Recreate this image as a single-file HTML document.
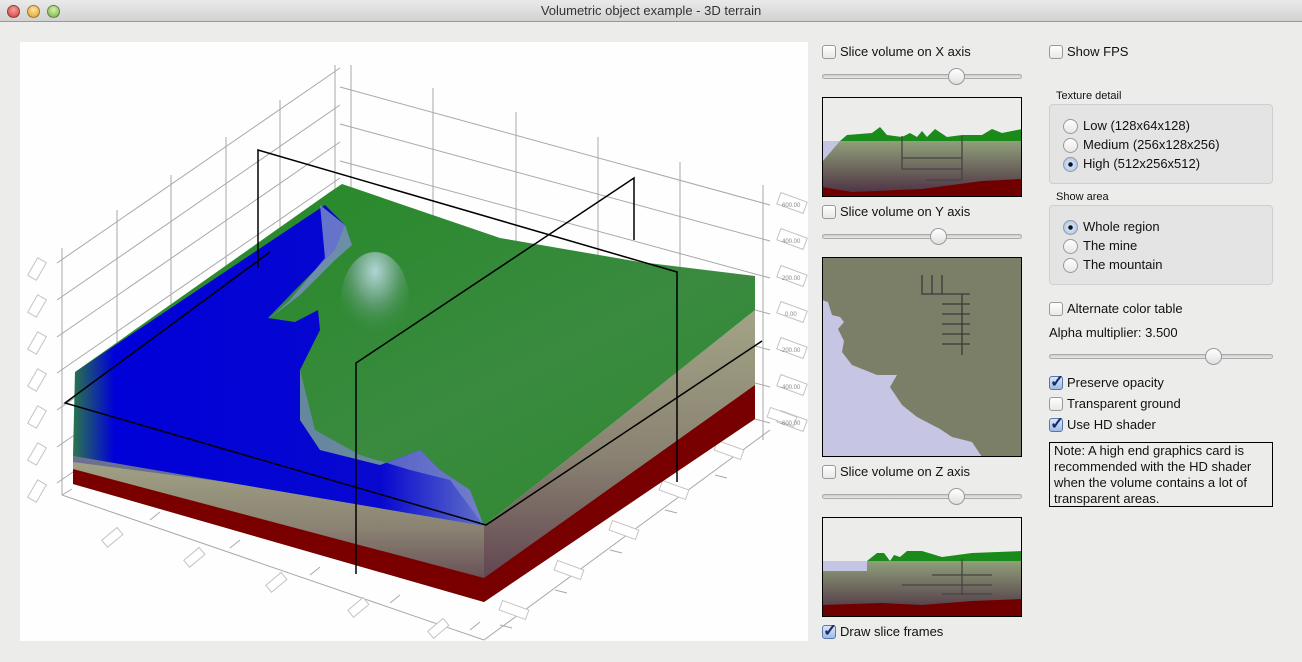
<!DOCTYPE html>
<html><head><meta charset="utf-8"><style>
*{margin:0;padding:0;box-sizing:border-box}
body{width:1302px;height:662px;background:#ecedeb;font-family:"Liberation Sans",sans-serif;font-size:13px;color:#111;position:relative;overflow:hidden}
.tb{position:absolute;left:0;top:0;width:1302px;height:22px;background:linear-gradient(#eaeaea,#d2d2d2);border-bottom:1px solid #999;text-align:center;font-size:13px;line-height:22px;color:#333}
.tl{position:absolute;top:5px;width:13px;height:13px;border-radius:50%;border:1px solid rgba(0,0,0,.35)}
.a{position:absolute;white-space:nowrap}
.cb{position:absolute;width:14px;height:14px;border:1px solid #999;border-radius:3px;background:linear-gradient(#fff,#e8e8e8)}
.rd{position:absolute;width:15px;height:15px;border:1px solid #999;border-radius:50%;background:linear-gradient(#fff,#e6e6e6)}
.rd.on{background:radial-gradient(circle,#111 0 2px,#cfe0f5 2.5px,#9fc0ea)}
.trk{position:absolute;height:5px;border:1px solid #aaa;border-radius:3px;background:linear-gradient(#ccc,#e8e8e8)}
.knb{position:absolute;width:17px;height:17px;border:1px solid #999;border-radius:50%;background:linear-gradient(#fff,#e0e0e0)}
.grp{position:absolute;border:1px solid #cfcfcf;border-radius:4px;background:#e4e4e4}
.ck{position:absolute;font-size:17px;color:#1a2a6a;font-weight:bold;line-height:14px}
</style></head><body>
<div class="tb">Volumetric object example - 3D terrain</div>
<div class="tl" style="left:7px;background:radial-gradient(circle at 50% 35%,#f5a0a0,#d33a32)"></div>
<div class="tl" style="left:27px;background:radial-gradient(circle at 50% 35%,#fde3a0,#e0a020)"></div>
<div class="tl" style="left:47px;background:radial-gradient(circle at 50% 35%,#d5f0b0,#70b040)"></div>

<svg class="a" style="left:20px;top:42px" width="788" height="599" viewBox="20 42 788 599">
<defs>
<linearGradient id="side" x1="0" y1="0" x2="0" y2="1"><stop offset="0" stop-color="#a2a486"/><stop offset=".5" stop-color="#8a8272"/><stop offset="1" stop-color="#5a3a4a"/></linearGradient>
<linearGradient id="blue" x1="0" y1="0" x2="1" y2="0"><stop offset="0" stop-color="#0000d8" stop-opacity=".15"/><stop offset=".1" stop-color="#0000d8"/><stop offset=".75" stop-color="#0808d0"/><stop offset="1" stop-color="#6070c8"/></linearGradient>
<radialGradient id="mt" cx=".5" cy=".2" r=".7"><stop offset="0" stop-color="#b0d4d4"/><stop offset=".5" stop-color="#5a9a6a"/><stop offset="1" stop-color="#2a8a30" stop-opacity="0"/></radialGradient>
<linearGradient id="gr" x1="0" y1="0" x2="1" y2="1"><stop offset="0" stop-color="#228a22"/><stop offset=".6" stop-color="#3a8a40"/><stop offset="1" stop-color="#2c8a2c"/></linearGradient>
</defs>
<rect x="20" y="42" width="788" height="599" fill="#fdfefd"/>
<g stroke="#a8a8a8" stroke-width="1" fill="none">
<path d="M57 263L340 68M57 300L340 105M57 337L340 142M57 373L340 178M57 410L340 215M57 447L340 252M57 483L340 288"/>
<path d="M340 87L770 205M340 124L770 241M340 161L770 278M340 198L770 314M340 235L770 350M340 272L770 387M340 309L770 423"/>
<path d="M62 248V495M117 210V470M171 175V460M226 137V440M280 100V420M335 65V400M351 65V300M433 88V400M516 112V400M598 137V400M680 162V420M763 185V440"/>
<path d="M62 495L484 640M484 640L770 430M62 495L72 489M150 520L160 512M230 548L240 540M310 575L320 567M390 603L400 595M470 630L480 622M500 625L512 628M555 590L567 593M610 550L622 553M665 510L677 513M715 475L727 478"/>
</g>
<g fill="#fff" stroke="#c4c4c4">
<rect x="32" y="259" width="10" height="20" transform="rotate(30 37 269)"/><rect x="32" y="296" width="10" height="20" transform="rotate(30 37 306)"/><rect x="32" y="333" width="10" height="20" transform="rotate(30 37 343)"/><rect x="32" y="370" width="10" height="20" transform="rotate(30 37 380)"/><rect x="32" y="407" width="10" height="20" transform="rotate(30 37 417)"/><rect x="32" y="444" width="10" height="20" transform="rotate(30 37 454)"/><rect x="32" y="481" width="10" height="20" transform="rotate(30 37 491)"/>
<rect x="778" y="197" width="28" height="12" transform="rotate(20 792 203)"/><rect x="778" y="233" width="28" height="12" transform="rotate(20 792 239)"/><rect x="778" y="270" width="28" height="12" transform="rotate(20 792 276)"/><rect x="778" y="306" width="28" height="12" transform="rotate(20 792 312)"/><rect x="778" y="342" width="28" height="12" transform="rotate(20 792 348)"/><rect x="778" y="379" width="28" height="12" transform="rotate(20 792 385)"/><rect x="778" y="415" width="28" height="12" transform="rotate(20 792 421)"/>
<rect x="108" y="527" width="9" height="20" transform="rotate(50 112 537)"/><rect x="190" y="547" width="9" height="20" transform="rotate(50 194 557)"/><rect x="272" y="572" width="9" height="20" transform="rotate(50 276 582)"/><rect x="354" y="597" width="9" height="20" transform="rotate(50 358 607)"/><rect x="434" y="618" width="9" height="20" transform="rotate(50 438 628)"/>
<rect x="500" y="605" width="28" height="10" transform="rotate(20 514 610)"/><rect x="555" y="565" width="28" height="10" transform="rotate(20 569 570)"/><rect x="610" y="525" width="28" height="10" transform="rotate(20 624 530)"/><rect x="660" y="485" width="28" height="10" transform="rotate(20 674 490)"/><rect x="715" y="445" width="28" height="10" transform="rotate(20 729 450)"/><rect x="768" y="412" width="28" height="10" transform="rotate(20 782 417)"/>
</g>
<g font-size="6" fill="#888"><text x="782" y="207">600.00</text><text x="782" y="243">400.00</text><text x="782" y="280">200.00</text><text x="785" y="316">0.00</text><text x="780" y="352">-200.00</text><text x="780" y="389">-400.00</text><text x="780" y="425">-600.00</text></g>
<!-- side faces -->
<polygon points="73,456 484,526 484,602 73,484" fill="url(#side)"/>
<polygon points="73,456 300,470 484,526 400,505 73,462" fill="#4a4e9a" opacity=".6"/>
<polygon points="73,469 484,578 484,602 73,484" fill="#7a0000"/>
<polygon points="484,526 755,310 755,419 484,602" fill="url(#side)"/>
<polygon points="484,578 755,385 755,419 484,602" fill="#780000"/>
<!-- top -->
<polygon points="75,372 330,192 342,184 500,238 640,262 755,276 755,310 484,526 73,456" fill="url(#gr)"/>
<polygon points="75,372 325,205 345,225 335,250 300,285 268,318 295,322 318,310 320,330 300,370 300,420 320,450 380,465 420,450 440,470 470,490 484,526 73,456" fill="url(#blue)"/>
<polygon points="320,205 345,225 352,245 335,260 300,295 270,318 290,300 325,258" fill="#7d8ec8" opacity=".8"/>
<polygon points="300,370 300,420 320,450 380,465 420,450 440,470 470,490 484,526 450,480 410,470 360,455 315,430" fill="#7a88c8" opacity=".7"/>
<ellipse cx="375" cy="300" rx="34" ry="48" fill="url(#mt)"/>
<!-- slice frames -->
<g stroke="#000" stroke-width="1.5" fill="none">
<path d="M258 268V150L677 272V482"/>
<path d="M634 240V178L356 363V574"/>
<path d="M270 252L65 403L486 525L762 341"/>
</g>
</svg>

<div class="cb" style="left:822px;top:45px"></div><div class="a" style="left:840px;top:44px">Slice volume on X axis</div>
<div class="trk" style="left:822px;top:74px;width:200px"></div><div class="knb" style="left:948px;top:68px"></div>
<svg class="a" style="left:822px;top:97px" width="200" height="100" viewBox="0 0 200 100">
<rect width="200" height="100" fill="#ecedeb"/>
<defs><linearGradient id="g1" x1="0" y1="0" x2="0" y2="1"><stop offset="0" stop-color="#8fa07a"/><stop offset="1" stop-color="#4a2a40"/></linearGradient></defs>
<rect x="0" y="44" width="200" height="56" fill="url(#g1)"/>
<polygon points="0,44 18,44 0,65" fill="#c4c4e4"/>
<path d="M18 44L25 38 50 36 58 30 65 38 80 40 88 36 95 40 100 34 105 40 113 32 125 40 140 38 160 38 170 32 180 36 200 32V44H18Z" fill="#1a8a1a"/>
<path d="M0 90L30 95 100 92 160 84 200 82V100H0Z" fill="#700000"/>
<g stroke="#444" stroke-width="1.3" fill="none"><path d="M80 39V72H140M80 61H140M140 39V83H104"/></g>
<rect x=".5" y=".5" width="199" height="99" fill="none" stroke="#000"/>
</svg>
<div class="cb" style="left:822px;top:205px"></div><div class="a" style="left:840px;top:204px">Slice volume on Y axis</div>
<div class="trk" style="left:822px;top:234px;width:200px"></div><div class="knb" style="left:930px;top:228px"></div>
<svg class="a" style="left:822px;top:257px" width="200" height="200" viewBox="0 0 200 200">
<rect width="200" height="200" fill="#7b7f68"/>
<path d="M0 43L6 45 10 58 18 60 22 65 16 72 22 84 20 95 30 108 55 118 75 118 68 130 80 148 95 160 118 172 130 180 150 185 160 200H0Z" fill="#c6c6e4"/>
<g stroke="#3a3a3a" stroke-width="1.3" fill="none"><path d="M100 18V37H148M110 18V37M120 18V37M140 37V98M120 47H148M120 57H148M120 67H148M120 77H148M120 87H148"/></g>
<rect x=".5" y=".5" width="199" height="199" fill="none" stroke="#000"/>
</svg>
<div class="cb" style="left:822px;top:465px"></div><div class="a" style="left:840px;top:464px">Slice volume on Z axis</div>
<div class="trk" style="left:822px;top:494px;width:200px"></div><div class="knb" style="left:948px;top:488px"></div>
<svg class="a" style="left:822px;top:517px" width="200" height="100" viewBox="0 0 200 100">
<rect width="200" height="100" fill="#ecedeb"/>
<defs><linearGradient id="g3" x1="0" y1="0" x2="0" y2="1"><stop offset="0" stop-color="#8fa07a"/><stop offset="1" stop-color="#4a2a40"/></linearGradient></defs>
<rect x="0" y="44" width="200" height="56" fill="url(#g3)"/>
<rect x="0" y="44" width="45" height="10" fill="#c4c4e4"/>
<path d="M45 44L55 36 62 36 68 44 72 38 78 40 85 34 100 34 120 40 150 36 200 34V44Z" fill="#1a8a1a"/>
<path d="M0 88L60 86 100 88 150 84 200 82V100H0Z" fill="#700000"/>
<g stroke="#444" stroke-width="1.3" fill="none"><path d="M140 42V78M110 58H170M80 68H170M120 77H170"/></g>
<rect x=".5" y=".5" width="199" height="99" fill="none" stroke="#000"/>
</svg>
<div class="cb" style="left:822px;top:625px;border-color:#5577aa;background:linear-gradient(#dde8f8,#9fbbe3)"></div><div class="ck" style="left:823px;top:624px">✓</div><div class="a" style="left:840px;top:624px">Draw slice frames</div>

<div class="cb" style="left:1049px;top:45px"></div><div class="a" style="left:1067px;top:44px">Show FPS</div>
<div class="a" style="left:1056px;top:90px;font-size:11px">Texture detail</div>
<div class="grp" style="left:1049px;top:104px;width:224px;height:80px"></div>
<div class="rd" style="left:1063px;top:119px"></div><div class="a" style="left:1083px;top:118px">Low (128x64x128)</div>
<div class="rd" style="left:1063px;top:138px"></div><div class="a" style="left:1083px;top:137px">Medium (256x128x256)</div>
<div class="rd on" style="left:1063px;top:157px"></div><div class="a" style="left:1083px;top:156px">High (512x256x512)</div>
<div class="a" style="left:1056px;top:191px;font-size:11px">Show area</div>
<div class="grp" style="left:1049px;top:205px;width:224px;height:80px"></div>
<div class="rd on" style="left:1063px;top:220px"></div><div class="a" style="left:1083px;top:219px">Whole region</div>
<div class="rd" style="left:1063px;top:239px"></div><div class="a" style="left:1083px;top:238px">The mine</div>
<div class="rd" style="left:1063px;top:258px"></div><div class="a" style="left:1083px;top:257px">The mountain</div>
<div class="cb" style="left:1049px;top:302px"></div><div class="a" style="left:1067px;top:301px">Alternate color table</div>
<div class="a" style="left:1049px;top:325px">Alpha multiplier: 3.500</div>
<div class="trk" style="left:1049px;top:354px;width:224px"></div><div class="knb" style="left:1205px;top:348px"></div>
<div class="cb" style="left:1049px;top:376px;border-color:#5577aa;background:linear-gradient(#dde8f8,#9fbbe3)"></div><div class="ck" style="left:1050px;top:375px">✓</div><div class="a" style="left:1067px;top:375px">Preserve opacity</div>
<div class="cb" style="left:1049px;top:397px"></div><div class="a" style="left:1067px;top:396px">Transparent ground</div>
<div class="cb" style="left:1049px;top:418px;border-color:#5577aa;background:linear-gradient(#dde8f8,#9fbbe3)"></div><div class="ck" style="left:1050px;top:417px">✓</div><div class="a" style="left:1067px;top:417px">Use HD shader</div>
<div class="a" style="left:1049px;top:442px;width:224px;height:65px;border:1px solid #000;padding:0 4px;line-height:16px;white-space:normal;font-size:13px">Note: A high end graphics card is recommended with the HD shader when the volume contains a lot of transparent areas.</div>
</body></html>
